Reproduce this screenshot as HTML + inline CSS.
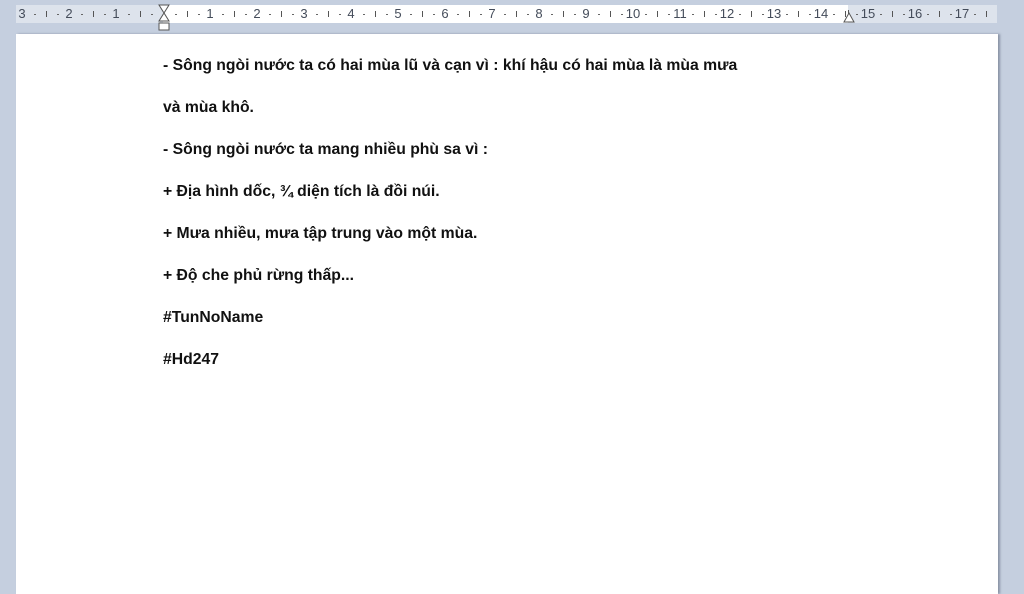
<!DOCTYPE html>
<html><head><meta charset="utf-8"><style>
html,body{margin:0;padding:0;}
body{width:1024px;height:588px;background:#c5cfdf;position:relative;overflow:hidden;font-family:"Liberation Sans",sans-serif;}
.ruler{position:absolute;left:16px;top:5px;width:981px;height:18px;background:#dde3ec;}
.rw{position:absolute;left:163px;top:5px;width:685px;height:18px;background:#fff;}
.n{position:absolute;top:6px;font-size:13px;color:#444c5a;line-height:16px;transform:translateX(-50%);}
.t{position:absolute;top:12px;width:1px;height:5px;background:#555;}
.d{position:absolute;top:14px;width:2px;height:1px;background:#666;}
.page{position:absolute;left:16px;top:34px;width:982px;height:560px;background:#fff;box-shadow:2px 0 2px rgba(80,90,110,.5);}
.l{position:absolute;left:163px;height:20px;line-height:20px;font-weight:bold;font-size:15.5px;color:#111;white-space:nowrap;transform:scaleX(1.015);transform-origin:left center;}
</style></head><body>
<div class="ruler"></div><div class="rw"></div>
<div id="r"></div>
<svg style="position:absolute;left:157px;top:4px" width="14" height="27" viewBox="0 0 14 27"><path d="M2 1H12L7 9Z M2 17H12L7 9Z" fill="#fff" stroke="#555" stroke-width="1"/><rect x="2" y="19" width="10" height="7" fill="#fff" stroke="#555"/></svg>
<svg style="position:absolute;left:842px;top:10px" width="14" height="14" viewBox="0 0 14 14"><path d="M2 12H12L7 3Z" fill="#fff" stroke="#555"/><rect x="6" y="0" width="1" height="4" fill="#555"/></svg>
<div class="page"></div>
<div class="l" style="top:56px">- Sông ngòi nước ta có hai mùa lũ và cạn vì : khí hậu có hai mùa là mùa mưa</div>
<div class="l" style="top:98px">và mùa khô.</div>
<div class="l" style="top:140px">- Sông ngòi nước ta mang nhiều phù sa vì :</div>
<div class="l" style="top:182px">+ Địa hình dốc, ¾ diện tích là đồi núi.</div>
<div class="l" style="top:224px">+ Mưa nhiều, mưa tập trung vào một mùa.</div>
<div class="l" style="top:266px">+ Độ che phủ rừng thấp...</div>
<div class="l" style="top:308px">#TunNoName</div>
<div class="l" style="top:350px">#Hd247</div>
<script>
var r=document.getElementById('r'),h='';
for(var i=-3;i<=18;i++){var x=163+47*i;
 if(i!==0&&i<=17&&x<1000)h+='<div class="n" style="left:'+x+'px">'+Math.abs(i)+'</div>';
 [11.75,35.25].forEach(function(o){var xx=x+o;if(xx>16&&xx<996)h+='<div class="d" style="left:'+xx+'px"></div>';});
 var xm=x+23.5;if(xm>16&&xm<996)h+='<div class="t" style="left:'+xm+'px;top:11px;height:6px"></div>';}
r.innerHTML=h;
</script>
</body></html>
